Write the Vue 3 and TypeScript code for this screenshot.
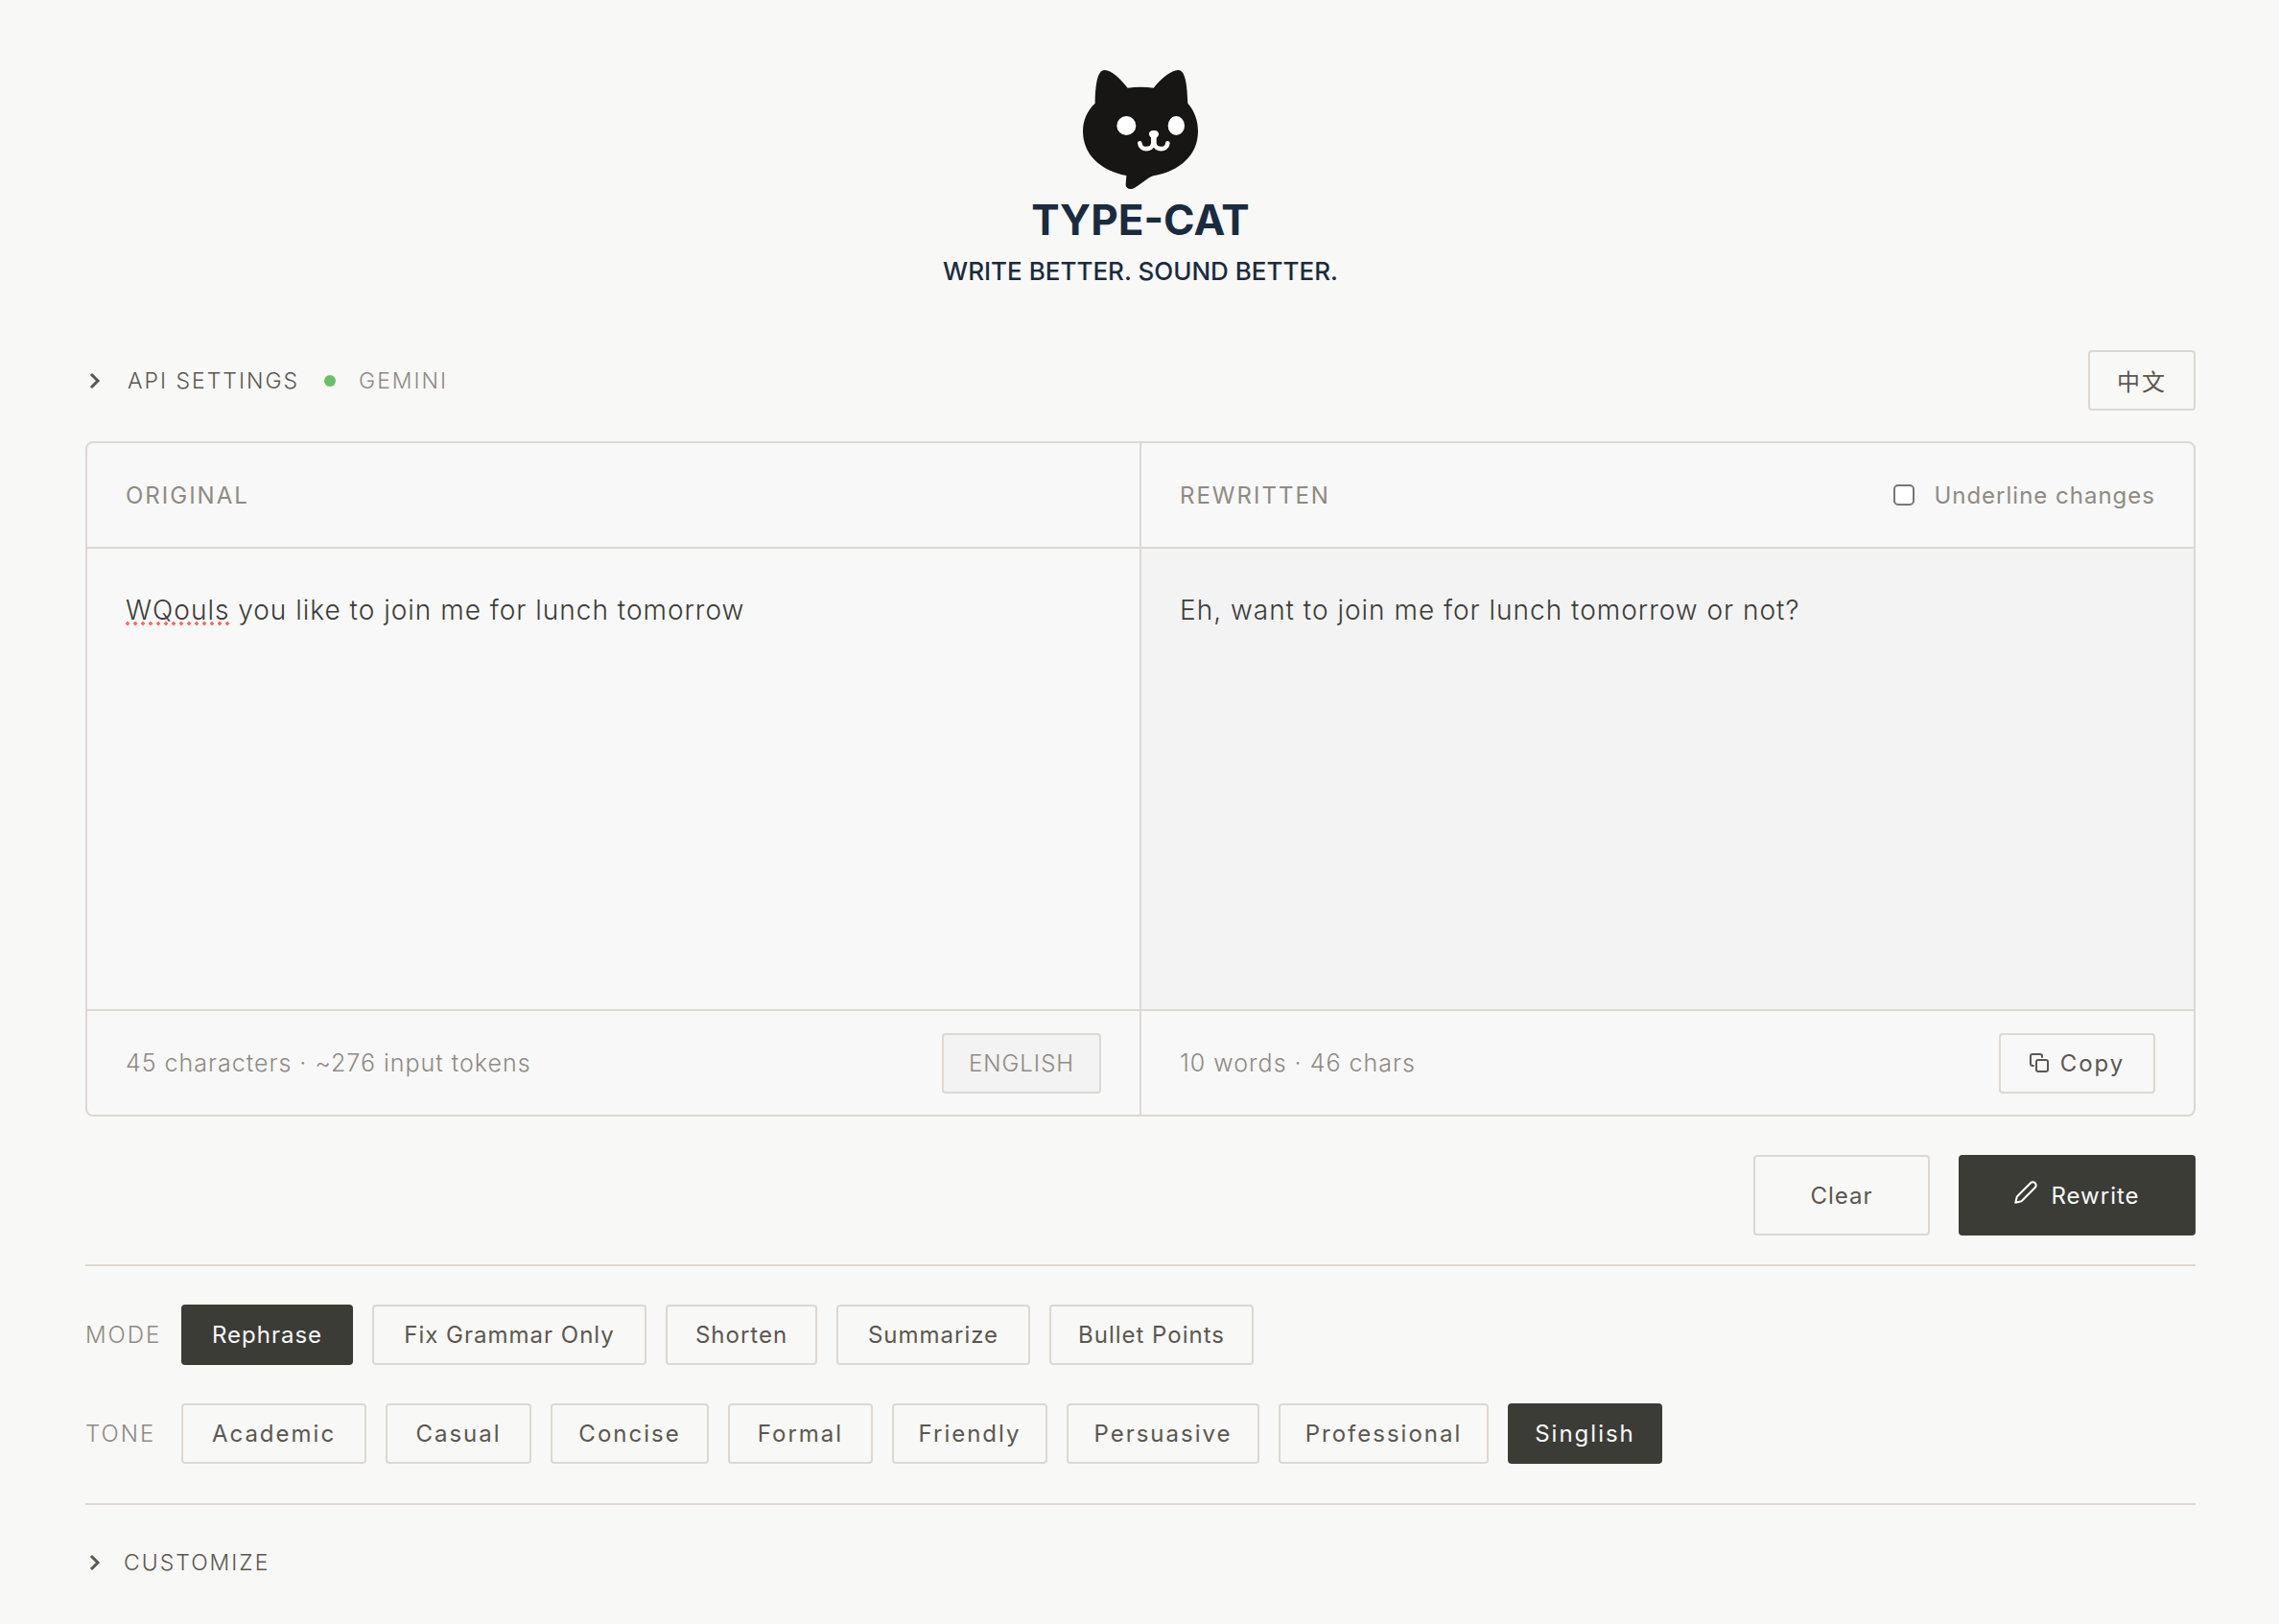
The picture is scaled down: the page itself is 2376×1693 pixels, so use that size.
<script setup lang="ts">
import { computed, ref } from 'vue'

interface Choice {
  label: string
  width: number
}

const modes: Choice[] = [
  { label: 'Rephrase', width: 179 },
  { label: 'Fix Grammar Only', width: 286 },
  { label: 'Shorten', width: 158 },
  { label: 'Summarize', width: 202 },
  { label: 'Bullet Points', width: 213 },
]

const tones: Choice[] = [
  { label: 'Academic', width: 193 },
  { label: 'Casual', width: 152 },
  { label: 'Concise', width: 165 },
  { label: 'Formal', width: 151 },
  { label: 'Friendly', width: 162 },
  { label: 'Persuasive', width: 201 },
  { label: 'Professional', width: 219 },
  { label: 'Singlish', width: 161 },
]

const mode = ref('Rephrase')
const tone = ref('Singlish')
const underline = ref(false)
const original = ref('WQouls you like to join me for lunch tomorrow')
const rewritten = ref('Eh, want to join me for lunch tomorrow or not?')

const promptTokens = 264
const inputTokens = computed(() => promptTokens + Math.ceil(original.value.length / 4))
const wordCount = computed(() => rewritten.value.split(/\s+/).filter(Boolean).length)

function clearAll(): void {
  original.value = ''
  rewritten.value = ''
}
</script>

<template>
  <main class="page">
    <header class="brand">
      <svg class="logo" viewBox="27 24 360 372" aria-hidden="true">
        <path
          fill="#171614"
          d="M95 24C115 24 143 49 167 80Q208 74 248 80C272 50 305 24 325 24C347 24 353 68 355 128C376 152 387 182 387 215C387 290 330 340 247 355C228 361 203 388 182 395C171 398 160 393 161 382L163 354C80 338 27 286 27 215C27 182 40 151 65 128C66 70 72 24 95 24Z"
        />
        <circle cx="163" cy="198" r="30" fill="#fff" />
        <ellipse cx="319" cy="198" rx="26" ry="30" fill="#fff" />
        <path fill="#fff" d="M249 213C260 213 265 219 264 226C263 233 257 238 249 238C241 238 235 233 234 226C233 219 238 213 249 213Z" />
        <path
          d="M205 253C207 276 243 276 247 254V234M292 253C290 276 254 276 250 254V234M248 238V260"
          fill="none"
          stroke="#fff"
          stroke-width="14"
          stroke-linecap="round"
          stroke-linejoin="round"
        />
      </svg>
      <h1>TYPE-CAT</h1>
      <p>WRITE BETTER. SOUND BETTER.</p>
    </header>

    <div class="settings">
      <button type="button" class="toggle" aria-expanded="false">
        <svg class="chevron" viewBox="0 0 16 24" aria-hidden="true"><path d="M6 5l7 7-7 7" /></svg>
        <span class="toggle-text">API SETTINGS</span>
        <span class="dot"></span>
        <span class="provider">GEMINI</span>
      </button>
      <button type="button" class="btn lang" lang="zh">中文</button>
    </div>

    <section class="editor">
      <div class="pane">
        <div class="pane-head">
          <label for="original" class="pane-title">ORIGINAL</label>
        </div>
        <div class="field">
          <textarea id="original" v-model="original" class="text" spellcheck="false"></textarea>
          <span v-if="original.startsWith('WQouls')" class="misspelt"></span>
        </div>
        <div class="pane-foot">
          <span class="count">{{ original.length }} characters · ~{{ inputTokens }} input tokens</span>
          <button type="button" class="btn detected">ENGLISH</button>
        </div>
      </div>
      <div class="pane">
        <div class="pane-head">
          <label for="rewritten" class="pane-title">REWRITTEN</label>
          <label class="check">
            <input v-model="underline" type="checkbox" />
            <span>Underline changes</span>
          </label>
        </div>
        <div class="field">
          <textarea id="rewritten" v-model="rewritten" class="text output" readonly spellcheck="false"></textarea>
        </div>
        <div class="pane-foot">
          <span class="count">{{ wordCount }} words · {{ rewritten.length }} chars</span>
          <button type="button" class="btn copy">
            <svg class="copy-icon" viewBox="0 0 20 20" aria-hidden="true">
              <rect x="7" y="7" width="12" height="12" rx="2" />
              <path d="M4 13H3a2 2 0 0 1-2-2V3a2 2 0 0 1 2-2h8a2 2 0 0 1 2 2v1" />
            </svg>
            <span>Copy</span>
          </button>
        </div>
      </div>
    </section>

    <div class="actions">
      <button type="button" class="btn action clear" @click="clearAll">Clear</button>
      <button type="button" class="btn action rewrite">
        <svg class="pencil" viewBox="0 0 24 24" aria-hidden="true">
          <path d="M17 2.3a3.3 3.3 0 0 1 4.7 4.7L7.5 21.2 1.3 22.7 2.8 16.500Z" />
        </svg>
        <span>Rewrite</span>
      </button>
    </div>

    <section class="options">
      <div class="option-row" role="group" aria-label="Mode">
        <span class="option-label">MODE</span>
        <button
          v-for="item in modes"
          :key="item.label"
          type="button"
          class="btn"
          :class="{ active: item.label === mode }"
          :style="{ minWidth: item.width + 'px' }"
          :aria-pressed="item.label === mode"
          @click="mode = item.label"
        >
          {{ item.label }}
        </button>
      </div>
      <div class="option-row" role="group" aria-label="Tone">
        <span class="option-label">TONE</span>
        <button
          v-for="item in tones"
          :key="item.label"
          type="button"
          class="btn tone"
          :class="{ active: item.label === tone }"
          :style="{ minWidth: item.width + 'px' }"
          :aria-pressed="item.label === tone"
          @click="tone = item.label"
        >
          {{ item.label }}
        </button>
      </div>
    </section>

    <button type="button" class="toggle customize" aria-expanded="false">
      <svg class="chevron" viewBox="0 0 16 24" aria-hidden="true"><path d="M6 5l7 7-7 7" /></svg>
      <span class="toggle-text">CUSTOMIZE</span>
    </button>
  </main>
</template>

<style>
body {
  background: #f8f8f6;
}
</style>

<style scoped>
.page {
  --line: #ddd8d1;
  --ink: #3c3c37;
  --text: #5b5750;
  --muted: #8f8a83;
  box-sizing: border-box;
  padding: 73px 87px 40px 89px;
  font-family: Inter, 'Noto Sans CJK SC', sans-serif;
  font-size: 24px;
  font-weight: 300;
  letter-spacing: 1px;
  color: var(--text);
}

.page * {
  box-sizing: border-box;
}

button {
  margin: 0;
  padding: 0;
  border: 0;
  background: none;
  color: inherit;
  font: inherit;
  letter-spacing: inherit;
  cursor: pointer;
}

.brand {
  display: flex;
  flex-direction: column;
  align-items: center;
  color: #1a2b3f;
  letter-spacing: 0;
}

.logo {
  display: block;
  width: 120px;
  height: 124px;
}

h1 {
  margin: 8px 0 0;
  font-size: 44px;
  line-height: 48px;
  font-weight: 700;
}

.brand p {
  margin: 12px 0 0;
  font-size: 26px;
  line-height: 36px;
  font-weight: 500;
}

.settings {
  display: flex;
  align-items: center;
  justify-content: space-between;
  margin-top: 64px;
}

.toggle {
  display: flex;
  align-items: center;
  font-size: 23px;
  letter-spacing: 2px;
}

.chevron {
  width: 16px;
  height: 24px;
  fill: none;
  stroke: var(--text);
  stroke-width: 3;
}

.toggle-text {
  margin-left: 28px;
}

.dot {
  width: 12px;
  height: 12px;
  margin: 0 24px 0 26px;
  border-radius: 50%;
  background: #68c068;
}

.provider {
  color: var(--muted);
}

.btn {
  display: flex;
  align-items: center;
  justify-content: center;
  height: 63px;
  padding: 0 24px;
  border: 2px solid var(--line);
  border-radius: 4px;
  font-weight: 400;
}

.lang {
  width: 112px;
  letter-spacing: 2px;
}

.editor {
  display: grid;
  grid-template-columns: 1fr 1fr;
  gap: 2px;
  margin-top: 32px;
  border: 2px solid var(--line);
  border-radius: 8px;
  background: var(--line);
  overflow: hidden;
}

.pane {
  background: #f8f8f8;
}

.pane-head,
.pane-foot {
  display: flex;
  align-items: center;
  justify-content: space-between;
  padding: 0 40px;
  color: var(--muted);
}

.pane-head {
  height: 110px;
  border-bottom: 2px solid var(--line);
}

.pane-foot {
  height: 110px;
  border-top: 2px solid var(--line);
}

.pane-title {
  font-weight: 400;
  letter-spacing: 2px;
}

.count {
  font-size: 25px;
}

.check {
  display: flex;
  align-items: center;
  gap: 20px;
  font-weight: 400;
}

.check input {
  appearance: none;
  width: 22px;
  height: 22px;
  margin: 0;
  border: 2px solid #767676;
  border-radius: 5px;
  background: #fff;
}

.check input:checked {
  background: var(--ink);
}

.field {
  position: relative;
}

.text {
  display: block;
  width: 100%;
  height: 480px;
  margin: 0;
  padding: 40px;
  border: 0;
  outline: 0;
  resize: none;
  background: transparent;
  color: var(--ink);
  font: inherit;
  font-size: 28px;
  line-height: 48px;
  letter-spacing: 1px;
}

.output {
  background: #f3f3f3;
}

.misspelt {
  position: absolute;
  top: 76px;
  left: 40px;
  width: 108px;
  height: 4px;
  background: radial-gradient(circle at 2px 2px, #ff6f66 2px, transparent 2px) 0 0 / 8px 4px;
  pointer-events: none;
}

.detected {
  width: 166px;
  background: #f3f3f3;
  font-weight: 300;
}

.copy {
  width: 163px;
  gap: 12px;
  color: var(--text);
  letter-spacing: 2px;
}

.copy-icon {
  width: 20px;
  height: 20px;
  fill: none;
  stroke: var(--text);
  stroke-width: 2;
  stroke-linecap: round;
}

.actions {
  display: flex;
  justify-content: flex-end;
  gap: 30px;
  margin-top: 40px;
}

.action {
  height: 84px;
}

.clear {
  width: 184px;
}

.rewrite {
  width: 247px;
  gap: 14px;
}

.pencil {
  width: 24px;
  height: 24px;
  margin-top: -6px;
  fill: none;
  stroke: #fff;
  stroke-width: 2;
  stroke-linejoin: round;
}

.rewrite,
.active {
  border-color: var(--ink);
  background: var(--ink);
  color: #f9f9f7;
}

.options {
  display: flex;
  flex-direction: column;
  gap: 40px;
  margin-top: 30px;
  padding: 40px 0 41px;
  border-top: 2px solid var(--line);
  border-bottom: 2px solid var(--line);
}

.option-row {
  display: flex;
  align-items: center;
  flex-wrap: wrap;
  gap: 20px;
}

.option-label {
  width: 80px;
  color: var(--muted);
  letter-spacing: 2px;
}

.tone {
  letter-spacing: 2px;
}

.customize {
  margin-top: 46px;
}

.customize .toggle-text {
  margin-left: 24px;
}
</style>
